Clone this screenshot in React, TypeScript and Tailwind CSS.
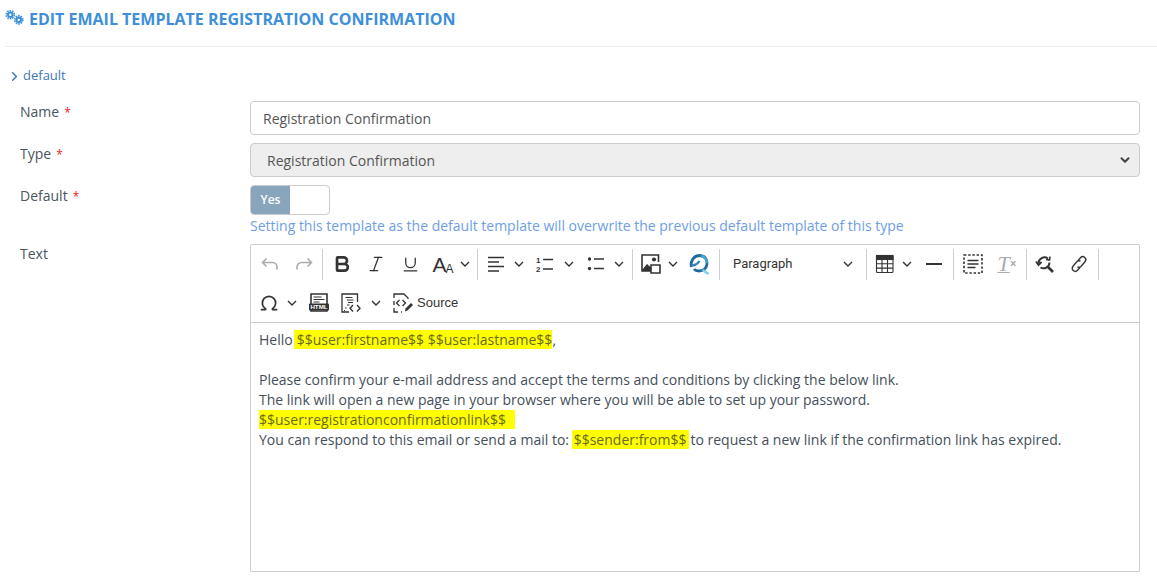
import React from 'react';
import { Bold, ChevronDown, ChevronRight, Italic, Omega, Underline } from 'lucide-react';

const Chevron = ({ className = '' }: { className?: string }) => (
  <svg viewBox="0 0 10 10" className={`w-[10px] h-[10px] shrink-0 ${className}`} fill="none" stroke="#333" strokeWidth="1.4">
    <path d="M1 3l4 4 4-4" />
  </svg>
);

const Sep = ({ className = 'ml-px mr-[2px]' }: { className?: string }) => (
  <span className={`w-px h-[31px] bg-[#ccced1] shrink-0 ${className}`} />
);

const Btn = ({ children, className = 'w-[34px]' }: { children: React.ReactNode; className?: string }) => (
  <span className={`h-[34px] flex items-center justify-center shrink-0 ${className}`}>{children}</span>
);

const Drop = ({ children, className, chevron = 'ml-px' }: { children: React.ReactNode; className: string; chevron?: string }) => (
  <span className={`h-[34px] flex items-center shrink-0 ${className}`}>
    <span className="w-[32px] flex items-center justify-center shrink-0">{children}</span>
    <Chevron className={chevron} />
  </span>
);

const icon = 'w-[20px] h-[20px]';

const UndoIcon = () => (
  <svg viewBox="0 0 20 20" className={icon} fill="none" stroke="#a9abae" strokeWidth="1.6">
    <path d="M6.500 4.500L2.500 8.500l4 4M2.500 8.500h10a4.500 4.500 0 0 1 4.500 4.500v2.500" />
  </svg>
);

const RedoIcon = () => (
  <svg viewBox="0 0 20 20" className={icon} fill="none" stroke="#a9abae" strokeWidth="1.6">
    <path d="M13.500 4.500l4 4-4 4M17.500 8.500h-10A4.500 4.500 0 0 0 3 13v2.500" />
  </svg>
);

const LinesIcon = () => (
  <svg viewBox="0 0 20 20" className={icon} fill="none" stroke="#333" strokeWidth="1.700">
    <path d="M2 3.500h16M2 8h11M2 12.500h16M2 17h11" />
  </svg>
);

const NumberedIcon = () => (
  <svg viewBox="0 0 20 20" className={icon} fill="none" stroke="#333">
    <path strokeWidth="1.600" d="M8 5.500h10M8 15h10" />
    <text x="1" y="9" fontSize="8" fontWeight="700" fill="#333" stroke="none" fontFamily="Liberation Sans, sans-serif">1</text>
    <text x="1" y="18" fontSize="8" fontWeight="700" fill="#333" stroke="none" fontFamily="Liberation Sans, sans-serif">2</text>
  </svg>
);

const BulletIcon = () => (
  <svg viewBox="0 0 20 20" className={icon} fill="none" stroke="#333" strokeWidth="1.600">
    <circle cx="3.500" cy="5" r="1.700" fill="#333" stroke="none" />
    <circle cx="3.500" cy="14.500" r="1.700" fill="#333" stroke="none" />
    <path d="M8 5h10M8 14.500h10" />
  </svg>
);

const ImageIcon = () => (
  <svg viewBox="0 0 20 20" className={icon} fill="none" stroke="#333" strokeWidth="1.600">
    <path d="M10 17H1V1h16.500v7" />
    <path d="M1 16l5-6 4 3.500V17H1z" fill="#333" stroke="none" />
    <circle cx="13" cy="5.500" r="2.100" fill="#333" stroke="none" />
    <path d="M10 11h9v8h-9z" fill="#fff" />
  </svg>
);

const QuickIcon = () => (
  <svg viewBox="0 0 22 22" className="w-[22px] h-[22px]" fill="none">
    <path d="M3.500 14C2 8 6 2.500 11.500 2.500S19.500 6.500 19 11c-.4 4-3.500 7-8 7-2.200 0-4-.7-5-2" stroke="#1f6b9f" strokeWidth="2.800" />
    <path d="M13 3c3.500.5 6 3.500 6 7" stroke="#4aa3cf" strokeWidth="2.800" />
    <path d="M5 12.500c2.500-.5 5-2 6.500-4.500" stroke="#2f88b8" strokeWidth="2.400" />
    <path d="M14.500 17l6 4" stroke="#7fd0ea" strokeWidth="2.600" />
  </svg>
);

const TableIcon = () => (
  <svg viewBox="0 0 20 20" className={icon} fill="none" stroke="#333" strokeWidth="1.100">
    <rect x="1.500" y="1.500" width="16.500" height="17" rx="1" />
    <rect x="1.500" y="1.500" width="16.500" height="4" fill="#333" />
    <path d="M7 5.500v13M12.500 5.500v13M1.500 9.800h16.500M1.500 14.100h16.500" />
  </svg>
);

const HtmlIcon = () => (
  <svg viewBox="0 0 20 20" className={icon} fill="none">
    <path d="M2 1h16v17H2z" stroke="#333" strokeWidth="1.600" fill="#fff" />
    <path d="M4.500 4h8M4.500 6.500h11M4.500 9h6" stroke="#333" strokeWidth="1.100" />
    <rect x="0" y="10.500" width="20" height="7" rx="1" fill="#333" />
    <text x="10" y="16.300" textAnchor="middle" fontSize="6.200" fontWeight="700" fill="#fff" fontFamily="Liberation Sans, sans-serif">HTML</text>
  </svg>
);

const TemplateIcon = () => (
  <svg viewBox="0 0 20 20" className={icon} fill="none" stroke="#333" strokeWidth="1.300">
    <path d="M8 19H1V1h15.500v8" />
    <path d="M4.500 4.500h7M6 7h6.500M7 9.500h5M6 12h2.500M4 15h1.500M3 17.500h1" strokeWidth="1" />
    <path d="M12 12l-3 3.200 3 3.200M16 12l3 3.200-3 3.200" strokeWidth="1.400" />
  </svg>
);

const SourceIcon = () => (
  <svg viewBox="0 0 20 20" className={icon} fill="none" stroke="#333" strokeWidth="1.300">
    <path d="M1 5V1h10l4 4v1M1 8v4M1 15v4h4M8 19h1" />
    <path d="M6.500 7L3.500 10l3 3M9.500 7l3 3-3 3" />
    <path d="M12 18.500l.5-3L18 10l2 2-5.500 5.500z" fill="#333" stroke="none" />
  </svg>
);

const BlockIcon = () => (
  <svg viewBox="0 0 20 20" className={icon} fill="none" stroke="#333" strokeWidth="1.600">
    <path d="M1 1h18v18H1z" strokeDasharray="2.400 1.800" />
    <path d="M4.500 6.500h11M4.500 10h11M4.500 13.500h8" />
  </svg>
);

const FindIcon = () => (
  <svg viewBox="0 0 20 20" className={icon} fill="none" stroke="#333" strokeWidth="2">
    <path d="M3.500 9.500A6 6 0 0 1 13 4.500" />
    <path d="M14.500 8.500A6 6 0 0 1 5.500 13.500" />
    <path d="M1 7.500l2.500 3.500L6.500 8" strokeWidth="1.800" />
    <path d="M11 5.500l3.500.5.500-3.500" strokeWidth="1.600" />
    <path d="M13 13l5 5" strokeWidth="2.600" />
  </svg>
);

const LinkIcon = () => (
  <svg viewBox="0 0 20 20" className={icon} fill="none" stroke="#333" strokeWidth="1.400">
    <path d="M9 6.500l2.500-2.700a3 3 0 0 1 4.500 4L12 12.500a3 3 0 0 1-3.500.3" />
    <path d="M11 13.500l-2.500 2.700a3 3 0 0 1-4.500-4L8 7.500a3 3 0 0 1 3.500-.3" />
  </svg>
);

const GearsIcon = () => (
  <svg viewBox="0 0 20 16" className="w-[19px] h-[15px]" fill="none" stroke="#3d8fd9">
    <circle cx="5.500" cy="5" r="2.400" strokeWidth="2.200" />
    <circle cx="5.500" cy="5" r="4.300" strokeWidth="1.800" strokeDasharray="1.700 1" />
    <circle cx="14.500" cy="10.500" r="2.400" strokeWidth="2.200" />
    <circle cx="14.500" cy="10.500" r="4.300" strokeWidth="1.800" strokeDasharray="1.700 1" />
  </svg>
);

const Required = () => <span className="text-[#ee1c25] text-[12px] ml-[5px]">*</span>;

const Mark = ({ children, className = '' }: { children: React.ReactNode; className?: string }) => (
  <span className={`bg-[#ffff00] text-[#6b6a1e] ${className}`}>{children}</span>
);

export default function App() {
  return (
    <div className="bg-white w-[1157px] h-[582px] overflow-hidden text-[14px] text-[#4a5560] font-['Open_Sans',sans-serif]">
      <div className="ml-[5px] h-[47px] border-b border-[#eeeeee] flex items-start pt-[10px] gap-[5px]">
        <GearsIcon />
        <h1 className="text-[16px] leading-[19px] font-bold uppercase text-[#3d8fd9] whitespace-nowrap">
          Edit email template Registration Confirmation
        </h1>
      </div>

      <div className="flex items-center h-[18px] mt-[20px] pl-[8px] text-[13px] text-[#3f78b5]">
        <ChevronRight className="w-[15px] h-[15px] mr-[1px] -ml-[1px]" strokeWidth={2.400} />
        default
      </div>

      <div className="pl-5 mt-[16px] flex flex-col w-[1140px]">
        <div className="flex h-[34px] mb-[8px]">
          <label className="w-[230px] pt-[1px] leading-[20px]">Name<Required /></label>
          <input
            readOnly
            value="Registration Confirmation"
            className="flex-1 border border-[#cccccc] rounded-[4px] px-3 text-[14px] text-[#555] outline-none"
          />
        </div>

        <div className="flex h-[34px] mb-[8px]">
          <label className="w-[230px] pt-[1px] leading-[20px]">Type<Required /></label>
          <div className="flex-1 bg-[#eeeeee] border border-[#cccccc] rounded-[4px] pl-4 pr-[7px] flex items-center justify-between text-[#555]">
            Registration Confirmation
            <ChevronDown className="w-[14px] h-[14px] text-[#444]" strokeWidth={3.500} />
          </div>
        </div>

        <div className="flex mb-[8px]">
          <label className="w-[230px] pt-[1px] leading-[20px]">Default<Required /></label>
          <div>
            <div className="w-[80px] h-[30px] border border-[#cccccc] rounded-[4px] overflow-hidden flex">
              <span className="w-[39px] bg-[#89a5bb] text-white text-[12px] font-semibold flex items-center justify-center">Yes</span>
            </div>
            <p className="text-[#6d9ee6] leading-[20px] mt-[1px]">
              Setting this template as the default template will overwrite the previous default template of this type
            </p>
          </div>
        </div>

        <div className="flex">
          <label className="w-[230px] leading-[20px]">Text</label>
          <div className="flex-1 h-[328px] border border-[#ccced1] rounded-t-[2px] flex flex-col">
            <div className="h-[78px] border-b border-[#ccced1] px-[2px] shrink-0">
              <div className="flex items-center h-[38px]">
                <Btn><UndoIcon /></Btn>
                <Btn><RedoIcon /></Btn>
                <Sep />
                <Btn><Bold className="w-[20px] h-[20px] text-[#333]" strokeWidth={3.200} /></Btn>
                <Btn><Italic className="w-[20px] h-[20px] text-[#333]" strokeWidth={1.500} /></Btn>
                <Btn><Underline className="w-[19px] h-[19px] text-[#333]" strokeWidth={1.600} /></Btn>
                <Drop className="w-[49px]">
                  <span className="text-[#333] font-['Liberation_Sans',sans-serif] leading-none flex items-end">
                    <span className="text-[21px]">A</span>
                    <span className="text-[12px] -ml-px">A</span>
                  </span>
                </Drop>
                <Sep />
                <Drop className="w-[49px]" chevron="ml-[2px]"><LinesIcon /></Drop>
                <Drop className="w-[51px]" chevron="ml-[3px]"><NumberedIcon /></Drop>
                <Drop className="w-[51px]" chevron="ml-[2px]"><BulletIcon /></Drop>
                <Sep />
                <Drop className="w-[46px]"><ImageIcon /></Drop>
                <Btn className="w-[36px]"><QuickIcon /></Btn>
                <Sep className="ml-[2px] mr-[2px]" />
                <span className="w-[143px] h-[34px] pl-[11px] pr-[12px] flex items-center justify-between shrink-0 text-[13px] text-[#333] font-['Roboto',sans-serif]">
                  Paragraph
                  <Chevron />
                </span>
                <Sep />
                <Drop className="w-[48px]"><TableIcon /></Drop>
                <Btn>
                  <span className="w-[16px] h-[2px] bg-[#333]" />
                </Btn>
                <Sep className="ml-[2px] mr-[2px]" />
                <Btn><BlockIcon /></Btn>
                <Btn>
                  <span className="font-['Liberation_Serif',serif] italic text-[22px] leading-none text-[#a9abae] underline decoration-1 underline-offset-1">T</span>
                  <span className="text-[12px] font-bold text-[#a9abae] self-end mb-[8px]">×</span>
                </Btn>
                <Sep className="ml-[2px] mr-px" />
                <Btn><FindIcon /></Btn>
                <Btn><LinkIcon /></Btn>
                <Sep className="ml-[2px]" />
              </div>
              <div className="flex items-center h-[39px]">
                <Drop className="w-[50px]" chevron="ml-[2px]"><Omega className="w-[20px] h-[20px] text-[#333]" strokeWidth={2} /></Drop>
                <Btn className="w-[32px]"><HtmlIcon /></Btn>
                <Drop className="w-[52px]" chevron="ml-[4px]"><TemplateIcon /></Drop>
                <span className="flex items-center h-[34px] pl-[6px] gap-[4px] text-[13px] text-[#333] font-['Liberation_Sans',sans-serif]">
                  <SourceIcon />
                  Source
                </span>
              </div>
            </div>

            <div className="flex-1 pl-[8px] pt-[7px] text-[14px] leading-[20px] text-[#454f5a]">
              <p>
                Hello<Mark className="ml-[1px] pl-[3px]">$$user:firstname$$ $$user:lastname$$</Mark>,
              </p>
              <p>&nbsp;</p>
              <p>Please confirm your e-mail address and accept the terms and conditions by clicking the below link.</p>
              <p>The link will open a new page in your browser where you will be able to set up your password.</p>
              <p><Mark className="pr-[9px]">$$user:registrationconfirmationlink$$</Mark></p>
              <p>
                You can respond to this email or send a mail to: <Mark className="-ml-px pl-[2px] pr-[3px]">$$sender:from$$</Mark><span className="ml-px">to request a new link if the confirmation link has expired.</span>
              </p>
            </div>
          </div>
        </div>
      </div>
    </div>
  );
}
